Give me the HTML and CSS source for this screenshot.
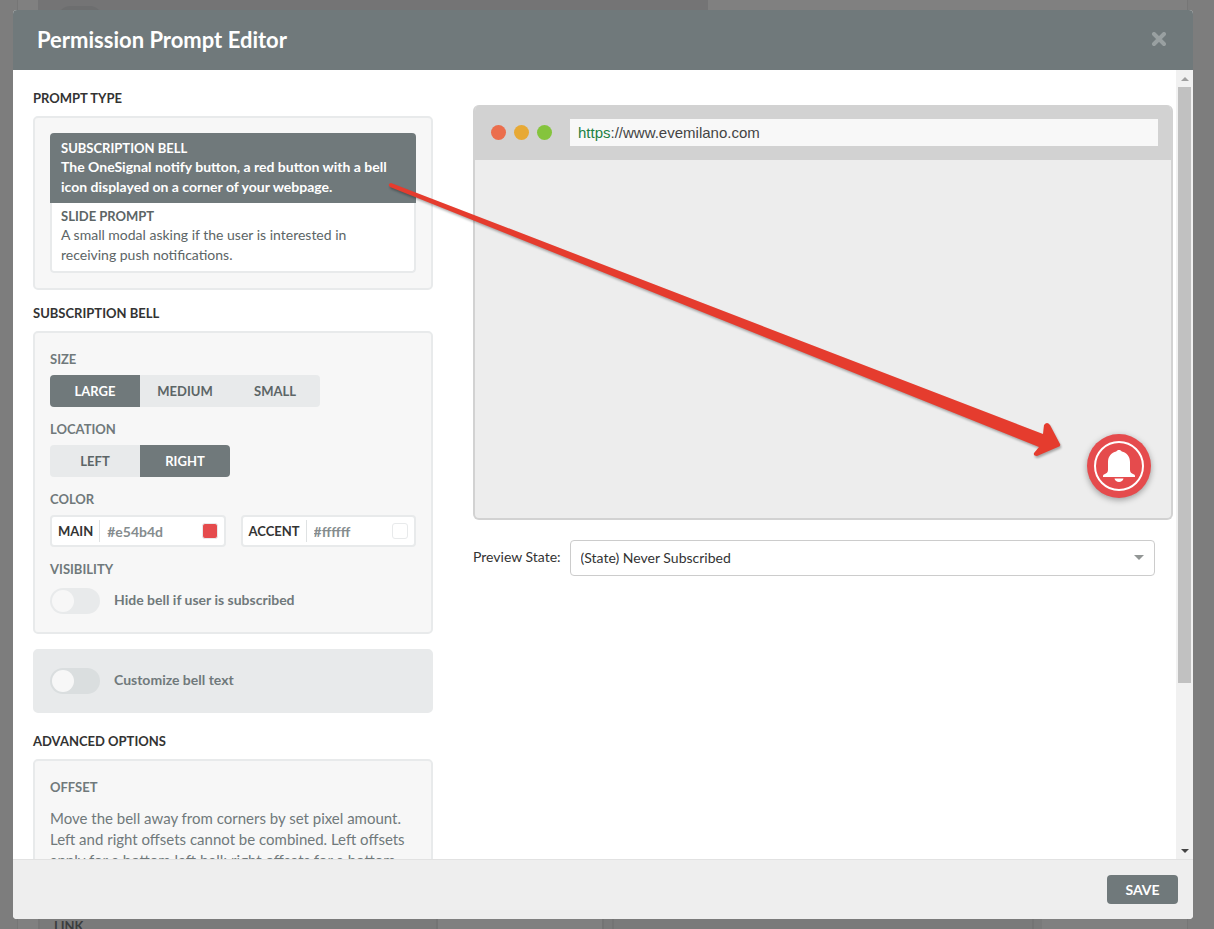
FILE: index.html
```html
<!DOCTYPE html>
<html lang="en">
<head>
<meta charset="utf-8">
<title>Permission Prompt Editor</title>
<link rel="stylesheet" href="styles.css">
</head>
<body>
<div class="page">
  <div class="backdrop">
    <div class="behind behind-top">
      <div class="behind-tab"><span class="behind-toggle"></span></div>
    </div>
    <div class="behind behind-bottom">
      <div class="behind-grid">
        <div class="behind-cell cell-link">LINK</div>
        <div class="behind-cell cell-narrow"></div>
        <div class="behind-cell cell-wide"></div>
        <div class="behind-cell cell-end"></div>
      </div>
    </div>
  </div>

  <section class="modal" role="dialog" aria-labelledby="modal-title">
    <header class="modal-header">
      <h1 class="modal-title" id="modal-title">Permission Prompt Editor</h1>
      <button class="close" type="button" aria-label="Close">
        <svg width="16" height="16" viewBox="0 0 16 16"><path d="M3 2L13 12M13 2L3 12" stroke="#99a0a1" stroke-width="4" stroke-linecap="round"/></svg>
      </button>
    </header>

    <div class="modal-body">
      <div class="content">
        <div class="settings">
          <h2 class="heading">PROMPT TYPE</h2>
          <div class="panel">
            <div class="choices">
              <button class="choice selected" type="button">
                <span class="choice-title">SUBSCRIPTION BELL</span>
                <span class="choice-text">The OneSignal notify button, a red button with a bell<br>icon displayed on a corner of your webpage.</span>
              </button>
              <button class="choice" type="button">
                <span class="choice-title">SLIDE PROMPT</span>
                <span class="choice-text">A small modal asking if the user is interested in<br>receiving push notifications.</span>
              </button>
            </div>
          </div>

          <h2 class="heading">SUBSCRIPTION BELL</h2>
          <div class="panel panel-fields">
            <div class="field">
              <h3 class="label">SIZE</h3>
              <div class="segments">
                <button class="segment active" type="button">LARGE</button>
                <button class="segment" type="button">MEDIUM</button>
                <button class="segment" type="button">SMALL</button>
              </div>
            </div>
            <div class="field">
              <h3 class="label">LOCATION</h3>
              <div class="segments">
                <button class="segment" type="button">LEFT</button>
                <button class="segment active" type="button">RIGHT</button>
              </div>
            </div>
            <div class="field">
              <h3 class="label">COLOR</h3>
              <div class="colors">
                <div class="color">
                  <label class="color-name" for="main-color">MAIN</label>
                  <input class="color-value" id="main-color" type="text" value="#e54b4d">
                  <span class="swatch swatch-main"></span>
                </div>
                <div class="color">
                  <label class="color-name" for="accent-color">ACCENT</label>
                  <input class="color-value" id="accent-color" type="text" value="#ffffff">
                  <span class="swatch"></span>
                </div>
              </div>
            </div>
            <div class="field field-toggle">
              <h3 class="label">VISIBILITY</h3>
              <div class="toggle-row">
                <input class="toggle" id="hide-bell" type="checkbox">
                <label class="toggle-label" for="hide-bell">Hide bell if user is subscribed</label>
              </div>
            </div>
          </div>

          <div class="panel panel-dark">
            <div class="toggle-row">
              <input class="toggle toggle-dark" id="custom-text" type="checkbox">
              <label class="toggle-label" for="custom-text">Customize bell text</label>
            </div>
          </div>

          <h2 class="heading heading-spaced">ADVANCED OPTIONS</h2>
          <div class="panel panel-fields">
            <h3 class="label">OFFSET</h3>
            <p class="note">Move the bell away from corners by set pixel amount.<br>Left and right offsets cannot be combined. Left offsets<br>apply for a bottom left bell; right offsets for a bottom</p>
          </div>
        </div>

        <div class="preview">
          <div class="browser">
            <div class="browser-bar">
              <div class="dots">
                <span class="dot dot-red"></span>
                <span class="dot dot-yellow"></span>
                <span class="dot dot-green"></span>
              </div>
              <div class="address"><span class="scheme">https</span>://www.evemilano.com</div>
            </div>
            <div class="browser-page">
              <button class="bell" type="button" aria-label="Subscribe">
                <svg width="64" height="64" viewBox="0 0 64 64">
                  <circle cx="32" cy="32" r="24" fill="none" stroke="#fff" stroke-width="2"/>
                  <path d="M32 16c1.300 0 2.300.6 2.800 1.500C39.500 18.500 43 22.200 43 28v8c0 2.400 1.400 3.400 3.500 4.300 1 .4 1.500.9 1.500 1.700v1H16v-1c0-.8.500-1.300 1.500-1.700C19.600 39.400 21 38.400 21 36v-8c0-5.800 3.500-9.500 8.200-10.500.5-.9 1.500-1.500 2.800-1.500z" fill="#fff"/>
                  <path d="M27.500 44.500h9c-.4 2.100-2.200 3.500-4.500 3.500s-4.100-1.400-4.500-3.500z" fill="#fff"/>
                </svg>
              </button>
            </div>
          </div>
          <div class="state">
            <label class="state-label" for="state">Preview State:</label>
            <div class="state-box">
              <select class="state-select" id="state"><option>(State) Never Subscribed</option></select>
              <span class="caret"></span>
            </div>
          </div>
        </div>
      </div>

      <div class="scrollbar">
        <span class="scroll-arrow scroll-up"></span>
        <div class="scroll-track"><div class="scroll-thumb"></div></div>
        <span class="scroll-arrow scroll-down"></span>
      </div>
    </div>

    <footer class="modal-footer">
      <button class="save" type="button">SAVE</button>
    </footer>
  </section>

  <svg class="arrow" width="690" height="290" viewBox="380 175 690 290">
    <path d="M391 183L1043 434L1044 425Q1047 421 1050 425L1060 444Q1061 446 1058 447L1037 456Q1033 456 1034 453L1039 447L390 187Q387 184 391 183Z" fill="#e53c2e"/>
  </svg>
</div>
</body>
</html>
```
FILE: styles.css
```css
* { box-sizing: border-box; }

body {
  margin: 0;
  font-family: Lato, "Liberation Sans", sans-serif;
  font-size: 14px;
  color: #333;
  background: #7d7d7d;
}

h1, h2, h3, p { margin: 0; }
button, input, select { font: inherit; }
button { padding: 0; border: 0; background: none; cursor: pointer; }

.page {
  position: relative;
  height: 100vh;
  overflow: hidden;
  display: flex;
  padding: 10px 21px 10px 13px;
}

/* dimmed page behind the dialog */
.backdrop {
  position: absolute;
  inset: 0;
  display: flex;
  flex-direction: column;
  justify-content: space-between;
}
.behind {
  height: 12px;
  margin: 0 26px 0 17px;
  padding-left: 20px;
  background: #808080;
  border-left: 1px solid #767676;
  border-right: 1px solid #767676;
  overflow: hidden;
}
.behind-tab { width: 670px; height: 12px; padding: 6px 20px; background: #747475; }
.behind-toggle { display: block; width: 44px; height: 24px; border-radius: 12px; background: #6d6e6f; }
.behind-grid { display: flex; height: 12px; background: #7a7a7a; }
.behind-cell { border-right: 2px solid #747474; }
.cell-link { width: 400px; padding-left: 14px; font-size: 13px; font-weight: 700; line-height: 18px; color: #3a3d3e; border-left: 2px solid #767676; }
.cell-narrow { width: 166px; background: #808080; }
.cell-wide { width: 422px; margin-left: 8px; border-left: 2px solid #747474; }
.cell-end { flex: 1; margin-left: 8px; border: 0; background: #808080; }

.modal {
  position: relative;
  flex: 1;
  min-width: 0;
  display: flex;
  flex-direction: column;
  background: #fff;
  border-radius: 4px;
  overflow: hidden;
}
.modal-header {
  height: 60px;
  flex: none;
  display: flex;
  align-items: center;
  justify-content: space-between;
  padding: 0 26px 0 24px;
  background: #70797b;
}
.modal-title { font-size: 22px; line-height: 28px; font-weight: 700; color: #fff; }
.close { display: flex; }

.modal-body { flex: 1; min-height: 0; display: flex; }
.content {
  flex: 1;
  min-width: 0;
  display: flex;
  gap: 40px;
  padding: 18px 3px 0 20px;
  overflow: hidden;
}

.settings { flex: none; width: 400px; }
.heading { margin: 13px 0 8px; font-size: 13px; line-height: 20px; font-weight: 700; color: #333; }
.heading:first-child { margin-top: 0; }
.heading-spaced { margin-top: 18px; }

.panel { padding: 15px; border: 2px solid #e8eaeb; border-radius: 5px; background: #f7f7f7; }
.panel-fields { padding: 16px 15px 18px; }
.panel-dark { margin-top: 15px; padding: 17px 15px; background: #e8eaeb; }

.choices { border-radius: 4px; overflow: hidden; }
.choice {
  display: block;
  width: 100%;
  padding: 4px 9px 6px;
  border: 2px solid #e8eaeb;
  border-top: 0;
  border-radius: 0 0 4px 4px;
  background: #fff;
  color: #5c6566;
  text-align: left;
}
.choice-title { display: block; font-size: 13px; line-height: 18px; font-weight: 700; }
.choice-text { display: block; font-size: 14px; line-height: 20px; }
.choice.selected { padding: 6px 11px; border: 0; border-radius: 0; background: #70797b; color: #fff; font-weight: 700; }

.field { display: flex; flex-direction: column; gap: 6px; margin-bottom: 12px; }
.field-toggle { gap: 9px; margin-bottom: 0; }
.label { font-size: 13px; line-height: 20px; font-weight: 700; color: #70797b; }

.segments { display: flex; align-self: flex-start; border-radius: 4px; overflow: hidden; }
.segment { width: 90px; height: 32px; background: #e8eaeb; color: #5c6566; font-size: 13px; font-weight: 700; }
.segment.active { background: #70797b; color: #fff; }

.colors { display: flex; gap: 15px; }
.color {
  flex: 1;
  min-width: 0;
  height: 32px;
  display: flex;
  align-items: center;
  padding: 0 6px;
  border: 2px solid #e8eaeb;
  border-radius: 4px;
  background: #fff;
}
.color-name { padding-right: 6px; border-right: 1px solid #dfe2e3; font-size: 13px; line-height: 22px; font-weight: 700; }
.color-value { flex: 1; min-width: 0; padding: 0 7px; border: 0; background: none; color: #858c8e; font-weight: 700; outline: 0; }
.swatch { flex: none; width: 16px; height: 16px; border: 1px solid #e8eaeb; border-radius: 3px; background: #fff; }
.swatch-main { background: #e54b4d; }

.toggle-row { display: flex; align-items: center; gap: 14px; }
.toggle {
  appearance: none;
  flex: none;
  width: 50px;
  height: 26px;
  margin: 0;
  padding: 2px;
  border-radius: 13px;
  background: #e8eaeb;
}
.toggle::before { content: ""; display: block; width: 22px; height: 22px; border-radius: 11px; background: #f7f7f7; }
.toggle-dark { background: #dadedf; }
.toggle-label { padding-bottom: 2px; font-weight: 700; line-height: 20px; color: #70797b; }

.note { margin-top: 11px; font-size: 15px; line-height: 21px; color: #70797b; white-space: nowrap; }

.preview { flex: 1; min-width: 0; padding-top: 17px; }
.browser { border: 2px solid #d2d2d2; border-top: 0; border-radius: 6px; overflow: hidden; background: #ededed; }
.browser-bar { display: flex; align-items: center; gap: 18px; height: 55px; padding: 0 13px 0 16px; background: #d2d2d2; }
.dots { display: flex; gap: 8px; }
.dot { width: 15px; height: 15px; border-radius: 8px; }
.dot-red { background: #eb6e4d; }
.dot-yellow { background: #e7a935; }
.dot-green { background: #85c43d; }
.address { flex: 1; padding-left: 8px; background: #f8f8f8; font-family: "Liberation Sans", Arial, sans-serif; font-size: 15px; line-height: 27px; color: #444; }
.scheme { color: #1d8044; }
.browser-page { display: flex; justify-content: flex-end; align-items: flex-end; height: 358px; padding: 20px; }
.bell { display: flex; border-radius: 32px; background: #e54b4d; box-shadow: 0 2px 6px rgba(0, 0, 0, .35); }

.state { display: flex; align-items: center; gap: 9px; margin: 20px 18px 0 0; }
.state-label { flex: none; padding-bottom: 2px; line-height: 20px; }
.state-box { position: relative; flex: 1; }
.state-select {
  appearance: none;
  display: block;
  width: 100%;
  height: 36px;
  padding: 0 10px 2px;
  border: 1px solid #ccc;
  border-radius: 4px;
  background: #fff;
  color: #333;
}
.caret {
  position: absolute;
  right: 11px;
  top: 15px;
  border: 5px solid transparent;
  border-top-color: #929695;
  border-bottom: 0;
}

.scrollbar { flex: none; width: 17px; display: flex; flex-direction: column; align-items: center; background: #f1f1f1; }
.scroll-arrow { margin: 7px 0 6px; border: 4px solid transparent; }
.scroll-up { border-top: 0; border-bottom-color: #a0a0a0; }
.scroll-down { border-bottom: 0; border-top-color: #444; }
.scroll-track { flex: 1; width: 13px; }
.scroll-thumb { height: 79%; background: #c1c1c1; }

.modal-footer {
  flex: none;
  display: flex;
  justify-content: flex-end;
  align-items: center;
  height: 60px;
  padding: 0 15px;
  border-top: 1px solid #e2e2e2;
  background: #eee;
}
.save { min-width: 71px; height: 29px; border-radius: 4px; background: #70797b; color: #fff; font-size: 14px; font-weight: 700; }

/* annotation arrow laid over the dialog */
.arrow { position: absolute; left: 380px; top: 175px; filter: drop-shadow(1px 2px 1px rgba(0, 0, 0, .3)); pointer-events: none; }
```
